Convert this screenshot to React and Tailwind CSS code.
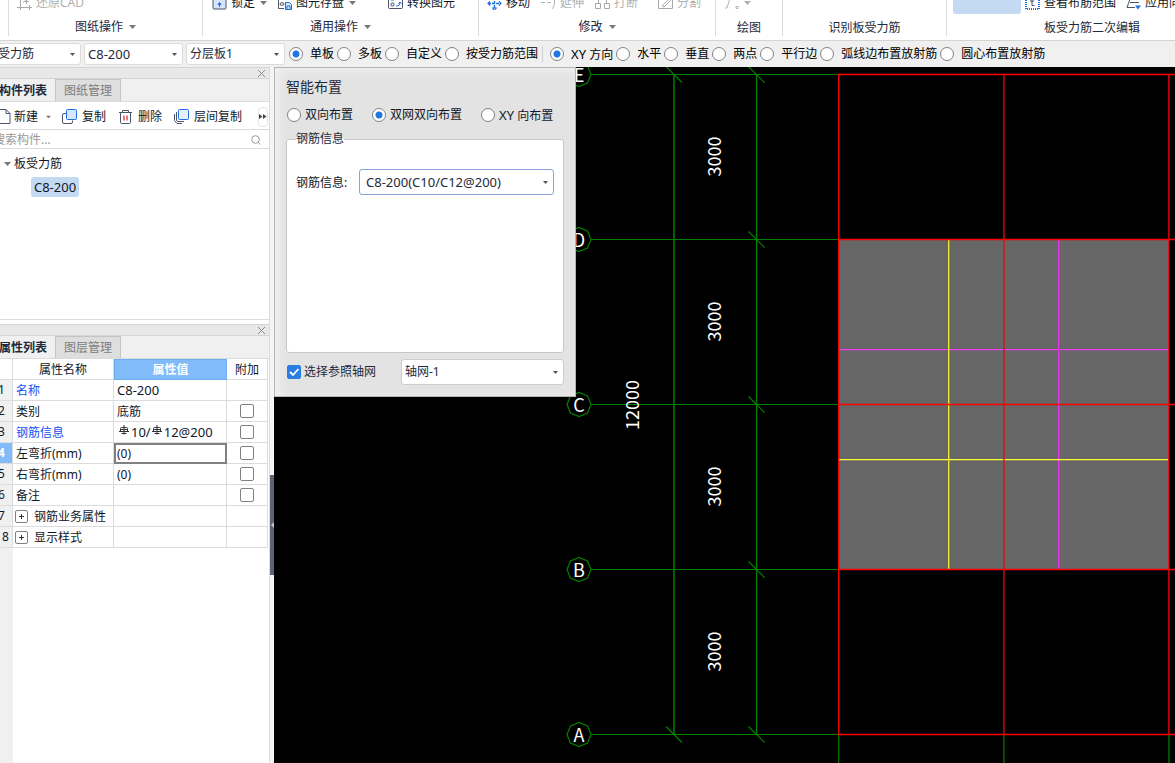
import React from 'react';

const properties = [
  { id: 1, name: '名称', value: 'C8-200', key: true },
  { id: 2, name: '类别', value: '底筋', extra: true },
  { id: 3, name: '钢筋信息', value: 'rebar', key: true, extra: true },
  { id: 4, name: '左弯折(mm)', value: '(0)', extra: true, active: true },
  { id: 5, name: '右弯折(mm)', value: '(0)', extra: true },
  { id: 6, name: '备注', value: '', extra: true },
  { id: 7, name: '钢筋业务属性', value: '', group: true },
  { id: 8, name: '显示样式', value: '', group: true },
];

const Caret = ({ className = 'text-[#777]' }) => (
  <svg width="7" height="4" viewBox="0 0 7 4" className={`shrink-0 ${className}`}>
    <path d="M0 0h7L3.5 4z" fill="currentColor" />
  </svg>
);

// 15px line icons of the ribbon and the component toolbar
const icons = {
  restore: (
    <path d="M3.500 0v11.500H15M0 11.500h6M3.500 9v5M12.500 9v5M6 6.500l3-2M9.500 8V3.500M7 5.500h5" fill="none" stroke="#a8a8a8" />
  ),
  lock: (
    <>
      <rect x="1" y="1" width="13" height="12" rx="1" fill="#d5e5fb" stroke="#4a5568" />
      <path d="M7.500 11V7M6 8.500L7.500 6.500 9 8.500z" fill="#1f6fe0" stroke="#1f6fe0" />
    </>
  ),
  save: (
    <>
      <path d="M7 12.500H1.500v-11h12V4" fill="none" stroke="#4a5568" />
      <ellipse cx="5" cy="8" rx="2" ry="1.300" fill="none" stroke="#4a5568" />
      <path d="M8.500 6.500h4l2 2v5h-6zM10 13v-3h3v3" fill="#d5e5fb" stroke="#1f6fe0" />
    </>
  ),
  convert: (
    <>
      <rect x="0.500" y="0.500" width="14" height="12" rx="1" fill="none" stroke="#4a5568" />
      <rect x="3" y="7" width="3" height="3" rx="1" fill="none" stroke="#4a5568" />
      <path d="M8 10c3 0 4-1 4-4M10.500 7.500L12 6l1.500 1.500M3 4h3" fill="none" stroke="#1f6fe0" />
    </>
  ),
  move: (
    <path
      d="M7.500 1v12M1 7.500h13M5.500 11.500l2 2.500 2-2.500M3 5.500l-2 2 2 2M12 5.500l2 2-2 2"
      fill="none"
      stroke="#1f6fe0"
      strokeWidth="1.400"
      strokeDasharray="3 1"
    />
  ),
  extend: <path d="M0 6.500h4M6 6.500h4M13.500 2v6l-2 5" fill="none" stroke="#b5b5b5" />,
  breakup: (
    <path d="M.5 7.500h5v5h-5zM9.500 7.500h5v5h-5zM3.500 7V3M11.500 7V3M1 3.500h4M10 3.500h4" fill="none" stroke="#a8a8a8" />
  ),
  split: <path d="M.5 2v10.500h14V2M4 10l7-7 1.500 1.500L6 11z" fill="none" stroke="#a8a8a8" />,
  line: <path d="M1 12h2L6 2M12 10.500h2v2h-2z" fill="none" stroke="#b5b5b5" />,
  range: (
    <>
      <rect x="1" y="1" width="13" height="12" fill="none" stroke="#1f6fe0" strokeWidth="2" strokeDasharray="1 1" />
      <path d="M5 5h4M7 3v6.500h2.500" fill="none" stroke="#4a5568" />
    </>
  ),
  apply: (
    <>
      <path d="M4 3L1 11.500h8M4 6.500h9" fill="none" stroke="#4a5568" />
      <path d="M9 9.500h6l-3 4z" fill="#1f6fe0" />
    </>
  ),
  file: <path d="M-4 .5H6l4 4v10H-4M6 .5v4h4" fill="none" stroke="#4a5568" />,
  copy: (
    <>
      <path d="M4 4.500H2a1.500 1.500 0 0 0-1.500 1.500v7A1.500 1.500 0 0 0 2 14.500h7a1.500 1.500 0 0 0 1.500-1.500v-1.500" fill="none" stroke="#4a5568" />
      <rect x="4.500" y="0.500" width="10" height="10" rx="1" fill="#d5e5fb" stroke="#1f6fe0" />
    </>
  ),
  trash: (
    <>
      <path d="M1 3.500h13M4.500 3V1.500h6V3M2.500 4v9.500a1 1 0 0 0 1 1h8a1 1 0 0 0 1-1V4" fill="none" stroke="#4a5568" />
      <path d="M6 6.500v5M9 6.500v5" stroke="#d8262c" strokeWidth="1.200" />
    </>
  ),
  layerCopy: (
    <>
      <path d="M.5 5v6.500L3 14.500h5M2.500 3v8.500l1.500 1h6" fill="none" stroke="#4a5568" />
      <rect x="4.500" y="0.500" width="10" height="10" rx="1" fill="#e6f0fd" stroke="#1f6fe0" />
    </>
  ),
};

const Icon = ({ name }) => (
  <svg width="15" height="15" viewBox="0 0 15 15" className="shrink-0">
    {icons[name]}
  </svg>
);

const Tool = ({ icon, label, caret, disabled, gap = 'gap-1', className = '' }) => (
  <button
    type="button"
    disabled={disabled}
    aria-label={label || icon}
    className={`flex shrink-0 items-center whitespace-nowrap ${gap} ${disabled ? 'text-[#b0b0b0]' : ''} ${className}`}
  >
    <Icon name={icon} />
    {label}
    {caret && <Caret className={disabled ? 'ml-px text-[#b0b0b0]' : 'ml-px text-[#777]'} />}
  </button>
);

const Group = ({ title, caret, className, children }) => (
  <section className={`flex shrink-0 flex-col ${className}`}>
    <div className="flex h-7 items-center pt-0.5">{children}</div>
    <button
      type="button"
      className={`flex h-5 items-center justify-center gap-1.5 text-gray-800 ${caret ? 'pt-px' : 'pt-1'}`}
    >
      {title}
      {caret && <Caret />}
    </button>
  </section>
);

const Select = ({ label, value, className = '', selectClass = '' }) => (
  <div className={`relative shrink-0 ${className}`}>
    <select
      aria-label={label}
      className={`size-full appearance-none rounded-[3px] border bg-white text-gray-800 outline-none ${selectClass}`}
    >
      <option>{value}</option>
    </select>
    <svg width="5" height="3" viewBox="0 0 5 3" className="pointer-events-none absolute top-1/2 right-1.5 -mt-px">
      <path d="M0 0h5L2.500 3z" fill="#4a5568" />
    </svg>
  </div>
);

const Radio = ({ name, checked, gap = 'gap-[7px]', children }) => (
  <label className={`flex shrink-0 items-center whitespace-nowrap ${gap}`}>
    <input
      type="radio"
      name={name}
      defaultChecked={checked}
      className="size-3.5 shrink-0 appearance-none rounded-full border border-[#808080] bg-white checked:bg-[radial-gradient(circle,#1f78e0_3px,#fff_4px)]"
    />
    <span>{children}</span>
  </label>
);

const PanelHead = ({ tabs }) => (
  <>
    <div className="flex h-3 items-center justify-end border-y border-[#d4d4d4] bg-[#e8e8e8] pr-1">
      <button type="button" aria-label="关闭">
        <svg width="7" height="7" viewBox="0 0 7 7">
          <path d="M0 0l7 7M7 0L0 7" stroke="#8a8a8a" />
        </svg>
      </button>
    </div>
    <div className="flex h-[23px] border-b border-[#dcdcdc] bg-[#f0f0f0]">
      <button type="button" className="flex w-[55px] items-center justify-end pt-0.5 pr-2 font-bold whitespace-nowrap text-gray-800">
        {tabs[0]}
      </button>
      <button type="button" className="border-x border-t border-[#c4c4c4] bg-[#dedede] px-2 pt-px text-[#7d7d7d]">
        {tabs[1]}
      </button>
    </div>
  </>
);

// Grade III rebar mark
const RebarMark = () => (
  <svg width="11" height="10" viewBox="0 0 11 10" className="-mt-1 shrink-0">
    <path d="M1.500 6.500v-3q0-1 1-1h5q1 0 1 1v3M5 0v9.500M0 6.500h10M2 4.500h6M2.500 8.500h5" fill="none" stroke="#333" />
  </svg>
);

const ComponentPanel = () => (
  <section>
    <PanelHead tabs={['构件列表', '图纸管理']} />
    <div className="flex h-7 items-center border-b border-[#dcdcdc] pt-0.5">
      <button type="button" className="flex w-[62px] items-center whitespace-nowrap">
        <svg width="14" height="15" viewBox="0 0 14 15">
          {icons.file}
        </svg>
        新建
        <Caret className="ml-[7px] scale-75 text-[#777]" />
      </button>
      <Tool icon="copy" label="复制" gap="gap-[5px]" className="mr-3" />
      <Tool icon="trash" label="删除" gap="gap-[5px]" className="mr-3" />
      <Tool icon="layerCopy" label="层间复制" gap="gap-[5px]" />
      <button type="button" aria-label="更多" className="mr-px ml-auto flex h-5 w-2.5 items-center justify-center rounded-sm border border-[#e4e4e4]">
        <svg width="8" height="5" viewBox="0 0 8 5" className="shrink-0">
          <path d="M0 0v5l3.500-2.500zM4 0v5l3.500-2.500z" fill="#444" />
        </svg>
      </button>
    </div>
    <div className="flex h-[19px] items-center border-b border-[#dcdcdc] pt-px pr-2">
      <input type="text" aria-label="搜索构件" placeholder="搜索构件..." className="-ml-[7px] min-w-0 flex-1 outline-none placeholder:text-[#9a9a9a]" />
      <svg width="10" height="10" viewBox="0 0 10 10">
        <circle cx="4.500" cy="4.500" r="3.800" fill="none" stroke="#999" />
        <path d="M7 7l2.500 2.500" stroke="#999" />
      </svg>
    </div>
    <ul className="h-[171px] border-b border-[#dcdcdc] pt-[3px]">
      <li>
        <div className="flex h-6 items-center gap-[3px] pl-1">
          <Caret />
          板受力筋
        </div>
        <ul className="pt-px pl-[31px]">
          <li className="flex h-5 w-12 items-center justify-center rounded-[3px] bg-[#c3daf2] text-[13px]">C8-200</li>
        </ul>
      </li>
    </ul>
  </section>
);

const cell = 'h-[21px] border-r border-b border-[#dcdcdc]';

const PropertyPanel = () => (
  <section className="mt-1 flex min-h-0 flex-1 flex-col">
    <PanelHead tabs={['属性列表', '图层管理']} />
    <table className="w-[268px] table-fixed border-separate border-spacing-0 leading-4">
      <thead>
        <tr>
          <th className={`${cell} w-[13px] p-0`}></th>
          <th className={`${cell} w-[101px] p-0 pt-0.5 font-normal`}>属性名称</th>
          <th className="h-[21px] w-[113px] border border-[#6cacf0] bg-[#82bbfa] p-0 text-white">属性值</th>
          <th className={`${cell} p-0 pt-0.5 font-normal`}>附加</th>
        </tr>
      </thead>
      <tbody>
        {properties.map((row) => (
          <tr key={row.id}>
            <td className={`${cell} p-0 ${row.active ? 'bg-[#82bbfa] font-bold text-white' : 'bg-[#f0f0f0]'} ${row.id === 8 ? 'indent-0.5' : '-indent-0.5'}`}>
              {row.id}
            </td>
            <td className={`${cell} p-0 pt-0.5 ${row.key ? 'text-[#1450f5]' : ''}`}>
              <div className="flex items-center gap-1.5 pl-[3px] whitespace-nowrap">
                {row.group && (
                  <button type="button" aria-label="展开" className="-mt-0.5 -ml-px flex size-[13px] items-center justify-center rounded-[2px] border border-[#808080]">
                    <svg width="5" height="5" viewBox="0 0 5 5">
                      <path d="M0 2.500h5M2.500 0v5" stroke="#333" />
                    </svg>
                  </button>
                )}
                {row.name}
              </div>
            </td>
            <td className={row.active ? 'h-[21px] border-2 border-[#808080] p-0 pl-px' : `${cell} p-0 pl-[3px]`}>
              {row.active && (
                <input type="text" aria-label={row.name} defaultValue={row.value} className="block h-4 w-full outline-none" />
              )}
              {row.value === 'rebar' && (
                <span className="flex items-center gap-px pl-0.5 text-[13px]">
                  <RebarMark />
                  10/
                  <RebarMark />
                  12@200
                </span>
              )}
              {!row.active && row.value !== 'rebar' && (
                <span className={row.id === 1 ? 'block text-[13px]' : 'block pt-px'}>{row.value}</span>
              )}
            </td>
            <td className={`${cell} p-0`}>
              {row.extra && (
                <input
                  type="checkbox"
                  aria-label={`附加 ${row.name}`}
                  className="mx-auto block size-3.5 appearance-none rounded-[2px] border border-[#808080] bg-white"
                />
              )}
            </td>
          </tr>
        ))}
      </tbody>
    </table>
    <div className="w-[13px] flex-1 bg-[#f0f0f0]"></div>
  </section>
);

const LayoutDialog = () => (
  <form className="absolute top-0 left-0 w-[302px] border border-[#b4b4b4] bg-[#e3e3e3] px-[11px] py-[11px] inset-shadow-[4px_2px_10px_#f2f2f2]">
    <h2 className="text-sm leading-4 text-gray-800">智能布置</h2>
    <div className="mt-3 flex h-4 items-center gap-[19px] pl-px">
      <Radio name="mode" gap="gap-1">双向布置</Radio>
      <Radio name="mode" gap="gap-1" checked>双网双向布置</Radio>
      <Radio name="mode" gap="gap-1"><span className="text-[13px]">XY</span> 向布置</Radio>
    </div>
    <fieldset className="mt-2 h-[222px] rounded-[3px] border border-[#c6c6c6] bg-white">
      <legend className="ml-[9px] leading-4 text-gray-800">钢筋信息</legend>
      <div className="flex items-center justify-between pt-[22px] pr-[9px] pl-[9px]">
        <span className="pt-0.5">钢筋信息:</span>
        <Select label="钢筋信息" value="C8-200(C10/C12@200)" className="h-[26px] w-[195px]" selectClass="border-[#8aa2d8] pl-1.5 text-[13px]" />
      </div>
    </fieldset>
    <div className="mt-1.5 flex items-center justify-between">
      <label className="flex items-center gap-[3px] pl-px text-gray-800">
        <span className="grid">
          <input
            type="checkbox"
            defaultChecked
            className="peer col-start-1 row-start-1 size-3.5 appearance-none rounded-[2px] border border-[#808080] bg-white checked:border-[#2a7de1] checked:bg-[#2a7de1]"
          />
          <svg width="14" height="14" viewBox="0 0 14 14" className="pointer-events-none invisible col-start-1 row-start-1 peer-checked:visible">
            <path d="M3 7l3 3 5.500-6" fill="none" stroke="#fff" strokeWidth="1.800" />
          </svg>
        </span>
        选择参照轴网
      </label>
      <Select label="参照轴网" value="轴网-1" className="h-[26px] w-[163px]" selectClass="border-[#cdcdcd] pl-[3px]" />
    </div>
  </form>
);

// Axis grid geometry, in canvas pixels
const axes = [
  { name: 'E', y: 7.5 },
  { name: 'D', y: 172.5 },
  { name: 'C', y: 337.5 },
  { name: 'B', y: 502.5 },
  { name: 'A', y: 667.5 },
];
const columns = [564.7, 729.9, 894.9];

const GridDrawing = () => (
  <svg className="absolute inset-0 size-full" fill="none" fontFamily="'Noto Sans CJK SC', sans-serif" fontSize="18">
    <rect x="565" y="173" width="330" height="330" fill="#666" />
    <g stroke="#008000" strokeWidth="1.200">
      {axes.map(({ name, y }) => (
        <g key={name}>
          <path d={`M317 ${y}H564`} />
          <path d={`M317 ${y}l-3.500-8.500-8.500-3.500-8.500 3.500-3.500 8.500 3.500 8.500 8.500 3.500 8.500-3.500z`} />
          <path d={`M474.500 ${y - 8}l16 16`} />
          {(name === 'E' || name === 'A') && <path d={`M392 ${y - 8}l16 16`} />}
        </g>
      ))}
      <path d="M400 7.500V667.500" strokeWidth="1.500" />
      <path d="M482.600 7.500V667.500" strokeWidth="1.300" />
      {columns.map((x) => (
        <path key={x} d={`M${x} 667V1000`} />
      ))}
    </g>
    <g strokeWidth="1.300">
      <path d="M565 282.700H894" stroke="#f23df2" />
      <path d="M784.700 173V502" stroke="#f032f0" />
      <path d="M565 392.600H894" stroke="#ffff32" />
      <path d="M674.700 173V502" stroke="#f5f032" />
    </g>
    <g stroke="#f00" strokeWidth="1.300">
      {axes.map(({ name, y }) => (
        <path key={name} d={`M564 ${y}H2000`} />
      ))}
      {columns.map((x) => (
        <path key={x} d={`M${x} 7V668`} />
      ))}
    </g>
    <g fill="#fff" textAnchor="middle">
      {axes.map(({ name, y }) => (
        <text key={name} x="305" y={y + 7}>{name}</text>
      ))}
      {axes.slice(1).map(({ name, y }) => (
        <text key={name} transform={`translate(447 ${y - 83}) rotate(-90)`}>3000</text>
      ))}
      <text transform="translate(365 338) rotate(-90)">12000</text>
    </g>
  </svg>
);

const App = () => {
  return (
    <div className="flex h-screen flex-col overflow-hidden bg-white font-['Noto_Sans','Noto_Sans_CJK_SC',sans-serif] text-xs leading-4 text-gray-900">
      {/* Ribbon, scrolled down to its last tool row */}
      <header className="flex h-[41px] shrink-0 items-end overflow-hidden border-b border-[#d4d4d4] pb-1">
        <div className="flex h-12 shrink-0 divide-x divide-[#dcdcdc]">
          <div className="w-[9px]"></div>
          <Group title="图纸操作" caret className="w-[194px]">
            <Tool icon="restore" label="还原CAD" disabled className="ml-2" />
          </Group>
          <Group title="通用操作" caret className="w-[276px]">
            <Tool icon="lock" label="锁定" caret className="ml-[9px]" />
            <Tool icon="save" label="图元存盘" caret className="ml-2.5" />
            <Tool icon="convert" label="转换图元" className="ml-8" />
          </Group>
          <Group title="修改" caret className="w-[237px]">
            <Tool icon="move" label="移动" className="ml-2" />
            <Tool icon="extend" label="延伸" disabled className="ml-[11px]" />
            <Tool icon="breakup" label="打断" disabled className="ml-[11px]" />
            <Tool icon="split" label="分割" disabled className="ml-5" />
          </Group>
          <Group title="绘图" className="w-[67px]">
            <Tool icon="line" caret disabled className="ml-2" />
          </Group>
          <Group title="识别板受力筋" className="w-[164px]" />
          <Group title="板受力筋二次编辑" className="w-[290px]">
            <button type="button" aria-label="布置受力筋" className="mb-0.5 ml-1.5 h-6 w-[68px] self-end rounded-[3px] bg-[#c3daf2]"></button>
            <Tool icon="range" label="查看布筋范围" className="ml-1" />
            <Tool icon="apply" label="应用同名板" className="ml-2.5" />
          </Group>
        </div>
      </header>

      <div className="flex h-[26px] shrink-0 items-center gap-[3px] overflow-hidden bg-[#f0f0f0] text-black">
        <Select label="构件类型" value="板受力筋" className="-ml-[18px] h-[22px] w-[99px]" selectClass="border-[#dcdcdc] pl-[3px]" />
        <Select label="构件" value="C8-200" className="h-[22px] w-[99px]" selectClass="border-[#dcdcdc] pl-[3px] text-[13px]" />
        <Select label="分层" value="分层板1" className="mr-px h-[22px] w-[99px]" selectClass="border-[#dcdcdc] pl-[3px]" />
        <Radio name="scope" checked>单板</Radio>
        <Radio name="scope">多板</Radio>
        <Radio name="scope">自定义</Radio>
        <Radio name="scope">按受力筋范围</Radio>
        <div className="mr-1 ml-px h-4 w-px bg-[#cfcfcf]"></div>
        <Radio name="direction" checked><span className="text-[13px]">XY</span> 方向</Radio>
        <Radio name="direction">水平</Radio>
        <Radio name="direction">垂直</Radio>
        <Radio name="direction">两点</Radio>
        <Radio name="direction">平行边</Radio>
        <Radio name="direction">弧线边布置放射筋</Radio>
        <Radio name="direction">圆心布置放射筋</Radio>
      </div>

      <div className="flex min-h-0 flex-1">
        <aside className="flex w-[270px] shrink-0 flex-col border-r border-[#dcdcdc]">
          <ComponentPanel />
          <PropertyPanel />
        </aside>
        <div className="w-1 shrink-0 bg-[#f5f5f5] pt-[408px]">
          <button type="button" aria-label="折叠" className="flex h-[100px] w-full items-center bg-[#5b6472]">
            <svg width="4" height="6" viewBox="0 0 4 6">
              <path d="M4 0v6L1 3z" fill="#c0c4ca" />
            </svg>
          </button>
        </div>
        <main className="relative flex-1 overflow-hidden bg-black">
          <GridDrawing />
          <LayoutDialog />
        </main>
      </div>
    </div>
  );
};

export default App;
